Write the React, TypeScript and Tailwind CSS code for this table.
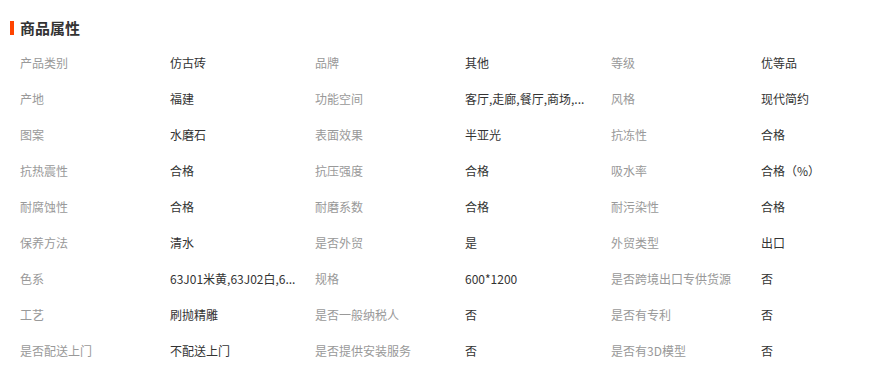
const attrs: Array<[string, string]> = [
  ["产品类别", "仿古砖"],
  ["品牌", "其他"],
  ["等级", "优等品"],
  ["产地", "福建"],
  ["功能空间", "客厅,走廊,餐厅,商场,..."],
  ["风格", "现代简约"],
  ["图案", "水磨石"],
  ["表面效果", "半亚光"],
  ["抗冻性", "合格"],
  ["抗热震性", "合格"],
  ["抗压强度", "合格"],
  ["吸水率", "合格（%）"],
  ["耐腐蚀性", "合格"],
  ["耐磨系数", "合格"],
  ["耐污染性", "合格"],
  ["保养方法", "清水"],
  ["是否外贸", "是"],
  ["外贸类型", "出口"],
  ["色系", "63J01米黄,63J02白,6..."],
  ["规格", "600*1200"],
  ["是否跨境出口专供货源", "否"],
  ["工艺", "刷抛精雕"],
  ["是否一般纳税人", "否"],
  ["是否有专利", "否"],
  ["是否配送上门", "不配送上门"],
  ["是否提供安装服务", "否"],
  ["是否有3D模型", "否"],
];

export default function App() {
  return (
    <div
      className="w-[882px] h-[372px] bg-white overflow-hidden"
      style={{ fontFamily: '"Microsoft YaHei", "Noto Sans CJK SC", sans-serif' }}
    >
      {/* Title */}
      <div className="flex items-center pt-[20px] pl-[10px] h-[36px]">
        <span className="w-[4px] h-[14px] bg-[#ff4400] mr-[6px]" />
        <h2 className="text-[15px] font-bold text-[#333] leading-[16px]">
          商品属性
        </h2>
      </div>

      {/* Attribute grid */}
      <div className="mt-[9px] pl-[20px] grid grid-cols-[150px_145px_150px_146px_150px_1fr]">
        {attrs.map(([label, value], index) => (
          <div key={index} className="contents">
            <div className="h-[36px] flex items-center text-[12px] text-[#999] whitespace-nowrap">
              {label}
            </div>
            <div className="h-[36px] flex items-center text-[12px] text-[#333] whitespace-nowrap">
              {value}
            </div>
          </div>
        ))}
      </div>
    </div>
  );
}
